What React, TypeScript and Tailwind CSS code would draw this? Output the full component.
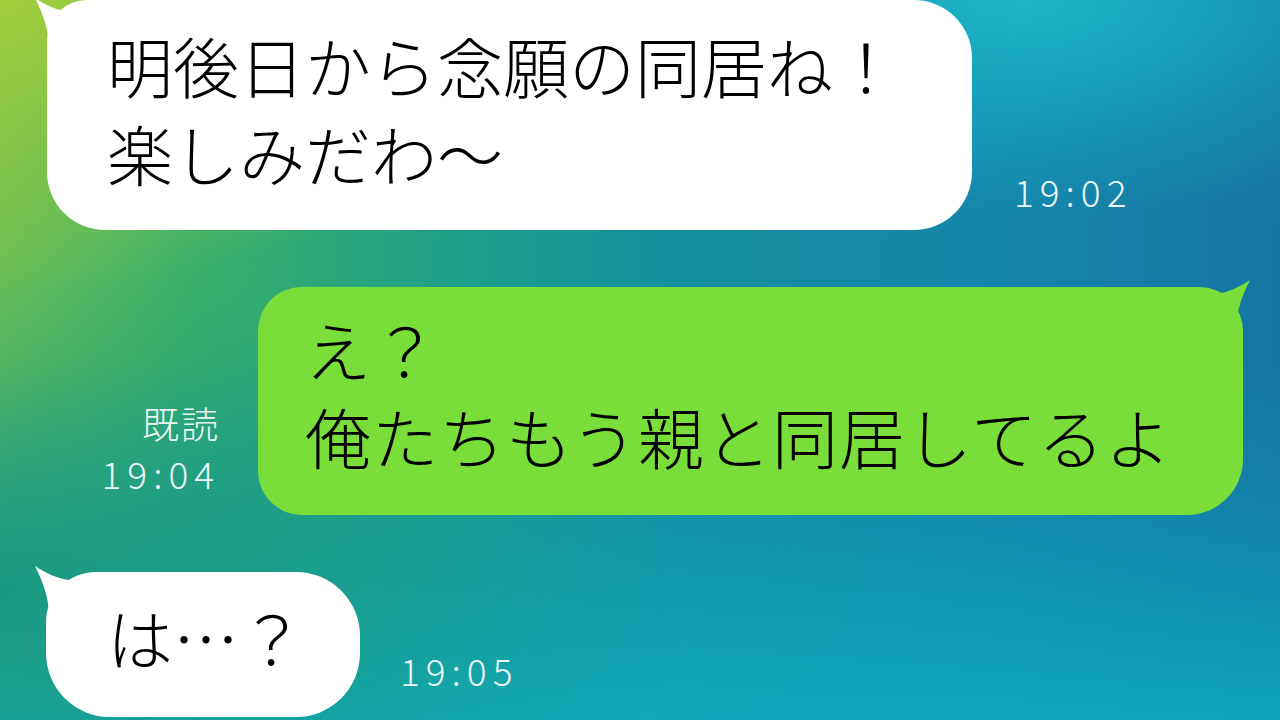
import React from 'react';

const bg =
  'bg-[image:radial-gradient(ellipse_45%_40%_at_0%_0%,rgba(165,205,60,0.95)_0%,rgba(165,205,60,0)_100%),radial-gradient(ellipse_40%_30%_at_80%_0%,rgba(28,186,204,0.9)_0%,rgba(28,186,204,0)_100%),radial-gradient(ellipse_55%_45%_at_0%_82%,rgba(24,152,128,0.95)_0%,rgba(24,152,128,0)_100%),linear-gradient(to_top,rgba(14,172,194,0.85)_0%,rgba(18,150,185,0.35)_30%,rgba(18,150,185,0)_50%),linear-gradient(92deg,#6cc052_0%,#3aaf6a_15%,#20a088_35%,#16909e_52%,#1584ab_78%,#1574a2_100%)]';

function WhiteTail({ className }: { className: string }) {
  return (
    <svg className={className} width="60" height="50" viewBox="0 0 60 50" fill="white">
      <path d="M2 0 C14 8 26 14 50 16 L52 50 L16 50 C16 32 10 16 2 0 Z" />
    </svg>
  );
}

function GreenTail() {
  return (
    <svg className="absolute -top-[7px] -right-[9px]" width="60" height="50" viewBox="0 0 60 50" fill="#79de3a">
      <path d="M58 0 C46 8 34 14 10 16 L8 50 L44 50 C44 32 50 16 58 0 Z" />
    </svg>
  );
}

export default function App() {
  return (
    <div
      className={`w-[1280px] h-[720px] overflow-hidden flex flex-col ${bg}`}
      style={{ fontFamily: '"Noto Sans CJK JP", "Noto Sans", sans-serif' }}
    >
      {/* incoming */}
      <div className="flex items-end">
        <div className="relative ml-[47px] w-[925px] h-[230px] bg-white rounded-[58px] rounded-tl-[40px] pl-[60px] pt-[20px] text-[66px] leading-[88px] font-light text-black">
          <WhiteTail className="absolute -top-[2px] -left-[14px]" />
          <p className="relative">明後日から念願の同居ね！</p>
          <p className="relative">楽しみだわ〜</p>
        </div>
        <span className="ml-[42px] mb-[20px] text-[37px] leading-none font-light tracking-[6px] text-[#eaf6f6]">
          19:02
        </span>
      </div>

      {/* outgoing */}
      <div className="flex items-end justify-end mt-[57px] pr-[37px]">
        <div className="mr-[38px] mb-[20px] flex flex-col items-end text-[#eaf6f6] font-light">
          <span className="text-[37px] leading-[44px] tracking-[2px]">既読</span>
          <span className="mt-[6px] text-[37px] leading-[44px] tracking-[6px]">19:04</span>
        </div>
        <div className="relative w-[985px] h-[228px] bg-[#79de3a] rounded-[44px] rounded-br-[56px] pl-[47px] pt-[18px] text-[66px] leading-[87px] font-light tracking-[1px] text-black">
          <GreenTail />
          <p className="relative">え？</p>
          <p className="relative">俺たちもう親と同居してるよ</p>
        </div>
      </div>

      {/* incoming */}
      <div className="flex items-end mt-[57px]">
        <div className="relative ml-[46px] w-[314px] h-[145px] bg-white rounded-[64px] rounded-tl-[50px] pl-[61px] pt-[20px] text-[66px] leading-[88px] font-light text-black">
          <WhiteTail className="absolute -top-[6px] -left-[13px]" />
          <p className="relative">は…？</p>
        </div>
        <span className="ml-[40px] mb-[28px] text-[37px] leading-none font-light tracking-[6px] text-[#eaf6f6]">
          19:05
        </span>
      </div>
    </div>
  );
}
